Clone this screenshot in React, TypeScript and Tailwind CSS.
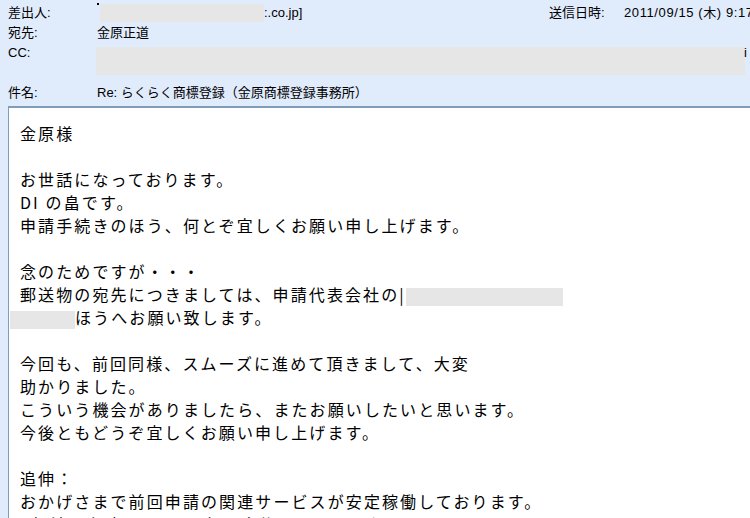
import React from "react";

const jp = { fontFamily: '"Liberation Sans", "Noto Sans CJK JP", sans-serif' };
const body = { fontFamily: '"Noto Sans CJK JP", "Liberation Sans", sans-serif' };

function Redact({ className }: { className: string }) {
  return <span className={`inline-block bg-[#e6e6e6] align-middle ${className}`} />;
}

function BodyLine({ children }: { children?: React.ReactNode }) {
  return <div className="h-[23px] whitespace-nowrap leading-[23px]">{children ?? "\u00a0"}</div>;
}

export default function App() {
  return (
    <div className="h-[518px] w-[750px] overflow-hidden bg-[#e0ebfb] text-black" style={jp}>
      {/* Header fields */}
      <div className="relative pl-2 pt-[3px] text-[13px]">
        <div className="grid h-5 grid-cols-[89px_1fr] items-center">
          <span>差出人:</span>
          <span className="flex items-center whitespace-nowrap">
            <span className="mr-[1px] inline-block h-[2px] w-[2px] self-start bg-black" />
            <Redact className="h-[18px] w-[164px]" />
            <span>:.co.jp]</span>
          </span>
        </div>
        <div className="absolute left-[549px] top-[3px] flex h-5 items-center whitespace-nowrap">
          <span className="w-[75px]">送信日時:</span>
          <span className="tracking-[0.6px]">2011/09/15 (木) 9:17</span>
        </div>
        <div className="grid h-5 grid-cols-[89px_1fr] items-center">
          <span>宛先:</span>
          <span>金原正道</span>
        </div>
        <div className="grid h-10 grid-cols-[89px_1fr]">
          <span className="leading-5">CC:</span>
          <span className="flex items-start">
            <Redact className="ml-[-1px] mt-1 h-[28px] w-[649px]" />
            <span className="ml-[-1px] leading-5">i</span>
          </span>
        </div>
        <div className="grid h-5 grid-cols-[89px_1fr] items-center">
          <span>件名:</span>
          <span className="whitespace-nowrap">Re: らくらく商標登録（金原商標登録事務所）</span>
        </div>
      </div>

      {/* Message body */}
      <div className="ml-2 mt-[3px] h-[420px] border-l border-t-2 border-[#7f9db9] bg-white pl-[11px] pt-[14px] text-[16px] tracking-[2.1px]" style={body}>
        <BodyLine>金原様</BodyLine>
        <BodyLine />
        <BodyLine>お世話になっております。</BodyLine>
        <BodyLine>DI の畠です。</BodyLine>
        <BodyLine>申請手続きのほう、何とぞ宜しくお願い申し上げます。</BodyLine>
        <BodyLine />
        <BodyLine>念のためですが・・・</BodyLine>
        <BodyLine>
          郵送物の宛先につきましては、申請代表会社の|
          <Redact className="h-[18px] w-[157px]" />
        </BodyLine>
        <BodyLine>
          <Redact className="ml-[-10px] h-[18px] w-[65px]" />
          ほうへお願い致します。
        </BodyLine>
        <BodyLine />
        <BodyLine>今回も、前回同様、スムーズに進めて頂きまして、大変</BodyLine>
        <BodyLine>助かりました。</BodyLine>
        <BodyLine>こういう機会がありましたら、またお願いしたいと思います。</BodyLine>
        <BodyLine>今後ともどうぞ宜しくお願い申し上げます。</BodyLine>
        <BodyLine />
        <BodyLine>追伸：</BodyLine>
        <BodyLine>おかげさまで前回申請の関連サービスが安定稼働しております。</BodyLine>
        <BodyLine>1年前の申請からはや1年、今後もよろしくお願いします。</BodyLine>
      </div>
    </div>
  );
}
